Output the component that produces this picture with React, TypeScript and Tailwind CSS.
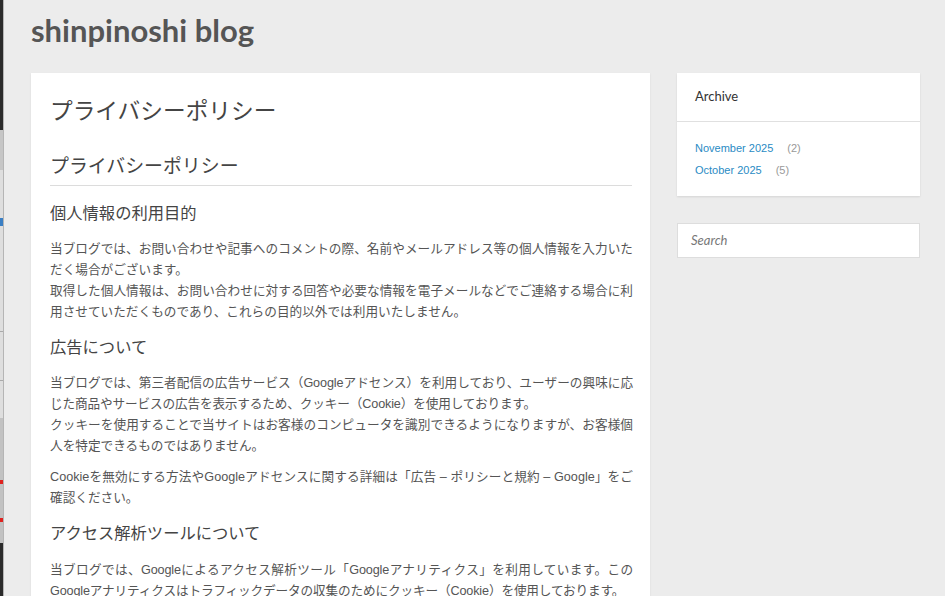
import React from 'react';

const bodyFont = { fontFamily: '"Liberation Sans", "Noto Sans CJK JP", sans-serif' };
const latoFont = { fontFamily: 'Lato, "Liberation Sans", sans-serif' };

const Strip: React.FC = () => (
  <div className="w-[4px] shrink-0 flex flex-col border-r border-[#b5b5b5]">
    <div className="h-[130px] bg-[#2b2b2b]" />
    <div className="h-[40px] bg-[#c6c6c6]" />
    <div className="h-[161px] bg-[#dedede] relative">
      <div className="absolute top-[48px] left-0 w-[3px] h-[8px] bg-[#3b7fc4]" />
    </div>
    <div className="h-[1px] bg-[#aaaaaa]" />
    <div className="h-[48px] bg-[#dedede]" />
    <div className="h-[1px] bg-[#aaaaaa]" />
    <div className="h-[37px] bg-[#dedede]" />
    <div className="h-[62px] bg-[#c2c2c2]" />
    <div className="h-[4px] bg-[#e0221f]" />
    <div className="h-[34px] bg-[#c2c2c2]" />
    <div className="h-[4px] bg-[#e0221f]" />
    <div className="h-[21px] bg-[#c2c2c2]" />
    <div className="flex-1 bg-[#2b2b2b]" />
  </div>
);

const P: React.FC<{ children: React.ReactNode; className?: string }> = ({ children, className = '' }) => (
  <p className={`text-[12.65px] leading-[21px] text-[#555] mb-[10px] text-justify ${className}`}>{children}</p>
);

const App: React.FC = () => {
  return (
    <div className="flex w-[945px] h-[596px] overflow-hidden bg-[#ececec]">
      <Strip />
      <div className="flex-1 pl-[27px]">
        <header className="h-[73px] flex items-center">
          <h1 className="text-[31px] font-bold text-[#555] -mt-[12px]" style={latoFont}>
            shinpinoshi blog
          </h1>
        </header>
        <div className="flex gap-[27px] items-start">
          {/* main article */}
          <main
            className="w-[619px] bg-white pl-[19px] pr-[17px] pt-[22px] pb-[40px] shadow-[0_1px_2px_rgba(0,0,0,0.08)]"
            style={bodyFont}
          >
            <h2 className="text-[22.7px] leading-[32px] text-[#444]">プライバシーポリシー</h2>
            <h3 className="mt-[26px] mr-[1px] text-[18.9px] leading-[28px] text-[#444] pb-[4px] border-b border-[#dcdcdc]">
              プライバシーポリシー
            </h3>
            <h4 className="text-[16.3px] leading-[24px] text-[#444] mt-[15px] mb-[14px]">個人情報の利用目的</h4>
            <P>
              当ブログでは、お問い合わせや記事へのコメントの際、名前やメールアドレス等の個人情報を入力いただく場合がございます。
              <br />
              取得した個人情報は、お問い合わせに対する回答や必要な情報を電子メールなどでご連絡する場合に利用させていただくものであり、これらの目的以外では利用いたしません。
            </P>
            <h4 className="text-[16.3px] leading-[24px] text-[#444] mt-[12px] mb-[14px]">広告について</h4>
            <P>
              <span className="tracking-[-0.15px]">
                当ブログでは、第三者配信の広告サービス（Googleアドセンス）を利用しており、ユーザーの興味に応じた商品やサービスの広告を表示するため、クッキー（Cookie）を使用しております。
              </span>
              <br />
              クッキーを使用することで当サイトはお客様のコンピュータを識別できるようになりますが、お客様個人を特定できるものではありません。
            </P>
            <P>
              Cookieを無効にする方法やGoogleアドセンスに関する詳細は「広告 – ポリシーと規約 – Google」をご確認ください。
            </P>
            <h4 className="text-[16.3px] leading-[24px] text-[#444] mt-[12px] mb-[15px]">アクセス解析ツールについて</h4>
            <P className="tracking-[-0.15px]">
              当ブログでは、Googleによるアクセス解析ツール「Googleアナリティクス」を利用しています。このGoogleアナリティクスはトラフィックデータの収集のためにクッキー（Cookie）を使用しております。
            </P>
          </main>

          {/* sidebar */}
          <aside className="w-[243px] flex flex-col gap-[27px]">
            <div className="bg-white shadow-[0_1px_2px_rgba(0,0,0,0.1)]">
              <div className="h-[49px] flex items-center px-[18px] pb-[1px] border-b border-[#e0e0e0]">
                <span className="text-[13px] text-[#333]" style={latoFont}>
                  Archive
                </span>
              </div>
              <ul className="px-[18px] pt-[15px] pb-[15px] text-[11px] leading-[22px]" style={bodyFont}>
                <li className="flex">
                  <a className="text-[#2a8bc4]">November 2025</a>
                  <span className="ml-[14px] text-[#999]">(2)</span>
                </li>
                <li className="flex">
                  <a className="text-[#2a8bc4]">October 2025</a>
                  <span className="ml-[14px] text-[#999]">(5)</span>
                </li>
              </ul>
            </div>
            <div className="h-[35px] bg-white border border-[#dddddd] flex items-center pl-[13px]">
              <span className="text-[13px] italic text-[#777]" style={latoFont}>
                Search
              </span>
            </div>
          </aside>
        </div>
      </div>
    </div>
  );
};

export default App;
